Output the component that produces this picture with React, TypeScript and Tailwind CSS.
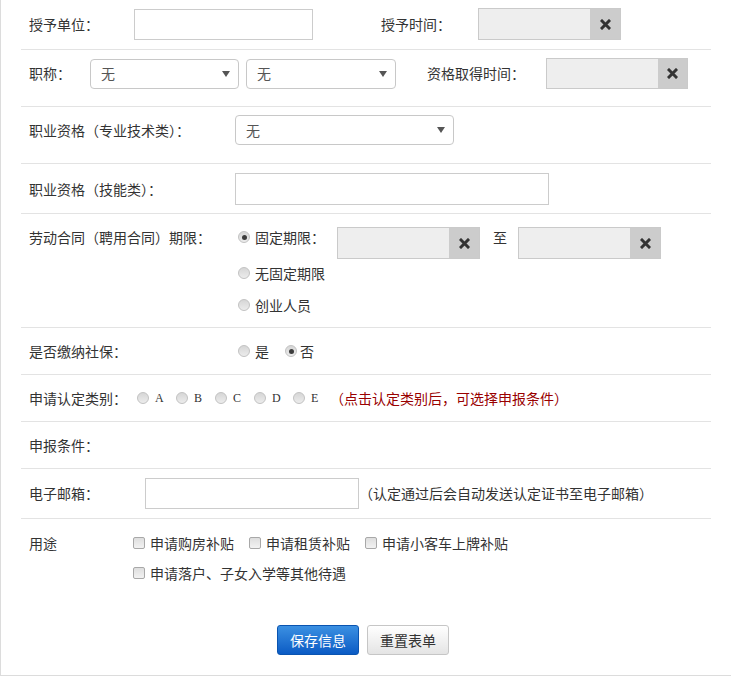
import React from "react";

const font = { fontFamily: '"Noto Sans CJK SC", "Microsoft YaHei", sans-serif' };

function Radio({ checked = false }: { checked?: boolean }) {
  return (
    <span className="relative inline-flex w-[12px] h-[12px] rounded-full border border-[#c2c2c2] bg-linear-to-b from-[#d6d6d6] to-[#ececec] items-center justify-center shrink-0">
      {checked && <span className="w-[5px] h-[5px] rounded-full bg-[#3c3c3c]" />}
    </span>
  );
}

function Checkbox() {
  return (
    <span className="inline-block w-[12px] h-[12px] rounded-[2px] border border-[#a8a8a8] bg-linear-to-b from-[#dedede] to-[#f2f2f2] shrink-0" />
  );
}

function Arrow() {
  return (
    <svg width="8" height="6" viewBox="0 0 8 6" className="shrink-0">
      <path d="M0 0 H8 L4 6 Z" fill="#555" />
    </svg>
  );
}

function Select({ w, h }: { w: string; h: string }) {
  return (
    <div className={`${w} ${h} flex items-center justify-between border border-[#c8c8c8] rounded-[4px] bg-white pl-[10px] pr-[8px] text-[14px] text-[#555]`}>
      <span>无</span>
      <Arrow />
    </div>
  );
}

function XIcon() {
  return (
    <svg width="11" height="11" viewBox="0 0 11 11">
      <path d="M2 2 L9 9 M9 2 L2 9" stroke="#333" strokeWidth="3" strokeLinecap="square" />
    </svg>
  );
}

function DateInput({ w, h, btn }: { w: string; h: string; btn: string }) {
  return (
    <div className={`${w} ${h} flex border border-[#cacaca] bg-[#eeeeee] shrink-0`}>
      <div className="flex-1" />
      <div className={`${btn} h-full bg-[#cccccc] flex items-center justify-center`}>
        <XIcon />
      </div>
    </div>
  );
}

export default function App() {
  const row = "w-[690px] border-b border-[#e3e3e3] box-border";
  return (
    <div
      className="w-[731px] h-[676px] border-l border-b border-[#dcdcdc] bg-white pl-[20px] text-[14px] text-[#333] box-border"
      style={font}
    >
      {/* Row 1 */}
      <div className={`${row} h-[50px] pt-[8px] pl-[8px]`}>
        <div className="flex items-center h-[32px]">
          <span className="w-[105px] shrink-0">授予单位：</span>
          <div className="w-[179px] h-[31px] border border-[#cccccc] bg-white shrink-0" />
          <span className="ml-[68px] w-[97px] shrink-0">授予时间：</span>
          <DateInput w="w-[143px]" h="h-[32px]" btn="w-[30px]" />
        </div>
      </div>

      {/* Row 2 */}
      <div className={`${row} h-[57px] pt-[8px] pl-[8px]`}>
        <div className="flex items-center h-[31px]">
          <span className="w-[61px] shrink-0">职称：</span>
          <Select w="w-[149px]" h="h-[30px]" />
          <div className="ml-[7px]">
            <Select w="w-[150px]" h="h-[30px]" />
          </div>
          <span className="ml-[31px] w-[119px] shrink-0">资格取得时间：</span>
          <DateInput w="w-[142px]" h="h-[31px]" btn="w-[29px]" />
        </div>
      </div>

      {/* Row 3 */}
      <div className={`${row} h-[57px] pt-[8px] pl-[8px]`}>
        <div className="flex items-center h-[30px]">
          <span className="w-[206px] shrink-0">职业资格（专业技术类）：</span>
          <Select w="w-[219px]" h="h-[30px]" />
        </div>
      </div>

      {/* Row 4 */}
      <div className={`${row} h-[50px] pt-[9px] pl-[8px]`}>
        <div className="flex items-center h-[32px]">
          <span className="w-[206px] shrink-0">职业资格（技能类）：</span>
          <div className="w-[314px] h-[32px] border border-[#cccccc] bg-white" />
        </div>
      </div>

      {/* Row 5 */}
      <div className={`${row} h-[114px] pt-[13px] pl-[8px]`}>
        <div className="flex items-start">
          <span className="w-[209px] shrink-0 leading-[20px]">劳动合同（聘用合同）期限：</span>
          <div className="flex flex-col">
            <div className="flex items-start">
              <div className="flex items-center h-[20px] w-[99px] shrink-0">
                <Radio checked />
                <span className="ml-[5px] leading-[20px]">固定期限：</span>
              </div>
              <DateInput w="w-[143px]" h="h-[32px]" btn="w-[30px]" />
              <span className="ml-[13px] w-[25px] leading-[20px]">至</span>
              <DateInput w="w-[143px]" h="h-[32px]" btn="w-[30px]" />
            </div>
            <div className="flex items-center h-[20px] mt-[4px]">
              <Radio />
              <span className="ml-[5px]">无固定期限</span>
            </div>
            <div className="flex items-center h-[20px] mt-[12px]">
              <Radio />
              <span className="ml-[5px]">创业人员</span>
            </div>
          </div>
        </div>
      </div>

      {/* Row 6 */}
      <div className={`${row} h-[47px] pl-[8px] flex items-center`}>
        <span className="w-[209px] shrink-0">是否缴纳社保：</span>
        <div className="flex items-center w-[47px]">
          <Radio />
          <span className="ml-[5px]">是</span>
        </div>
        <div className="flex items-center">
          <Radio checked />
          <span className="ml-[3px]">否</span>
        </div>
      </div>

      {/* Row 7 */}
      <div className={`${row} h-[47px] pl-[8px] flex items-center`}>
        <span className="w-[108px] shrink-0">申请认定类别：</span>
        {["A", "B", "C", "D", "E"].map((l) => (
          <div key={l} className="flex items-center w-[39px] shrink-0">
            <Radio />
            <span className="ml-[6px] text-[12px]" style={{ fontFamily: '"Liberation Serif", serif' }}>
              {l}
            </span>
          </div>
        ))}
        <span className="text-[#990000] -ml-[2px]">（点击认定类别后，可选择申报条件）</span>
      </div>

      {/* Row 8 */}
      <div className={`${row} h-[47px] pl-[8px] flex items-center`}>
        <span>申报条件：</span>
      </div>

      {/* Row 9 */}
      <div className={`${row} h-[50px] pt-[9px] pl-[8px]`}>
        <div className="flex items-center h-[31px]">
          <span className="w-[116px] shrink-0">电子邮箱：</span>
          <div className="w-[214px] h-[31px] border border-[#cccccc] bg-white shrink-0" />
          <span className="ml-[0px]">（认定通过后会自动发送认定证书至电子邮箱）</span>
        </div>
      </div>

      {/* Row 10 */}
      <div className="w-[690px] pt-[14px] pl-[8px] flex items-start">
        <span className="w-[104px] shrink-0 leading-[20px]">用途</span>
        <div className="flex flex-wrap w-[480px] gap-y-[10px]">
          <div className="flex items-center h-[20px] mr-[15px]">
            <Checkbox />
            <span className="ml-[5px]">申请购房补贴</span>
          </div>
          <div className="flex items-center h-[20px] mr-[15px]">
            <Checkbox />
            <span className="ml-[5px]">申请租赁补贴</span>
          </div>
          <div className="flex items-center h-[20px] mr-[15px]">
            <Checkbox />
            <span className="ml-[5px]">申请小客车上牌补贴</span>
          </div>
          <div className="flex items-center h-[20px]">
            <Checkbox />
            <span className="ml-[5px]">申请落户、子女入学等其他待遇</span>
          </div>
        </div>
      </div>

      {/* Buttons */}
      <div className="flex mt-[42px] pl-[256px] gap-[8px]">
        <button className="w-[82px] h-[30px] rounded-[3px] border border-[#0a54b0] bg-linear-to-b from-[#3b90e2] to-[#0a5bc4] text-white text-[14px]">
          保存信息
        </button>
        <button className="w-[82px] h-[30px] rounded-[3px] border border-[#c6c6c6] bg-linear-to-b from-[#ffffff] to-[#e4e4e4] text-[#333] text-[14px]">
          重置表单
        </button>
      </div>
    </div>
  );
}
